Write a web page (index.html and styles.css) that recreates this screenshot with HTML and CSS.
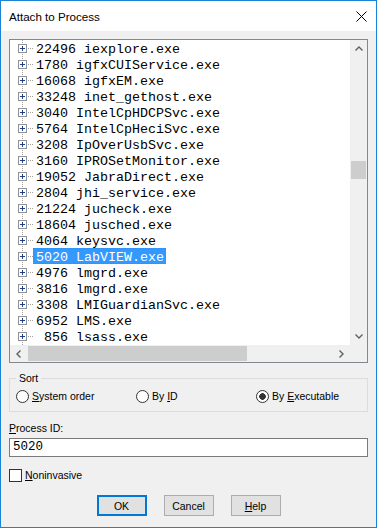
FILE: index.html
```html
<!DOCTYPE html>
<html lang="en">
<head>
  <meta charset="UTF-8" />
  <title>Attach to Process</title>
  <link rel="stylesheet" href="styles.css">
</head>
<body>

  <div class="window">
    <!-- caption -->
    <div class="titlebar">
      <span class="title">Attach to Process</span>
      <svg class="close" width="11" height="11" viewBox="0 0 11 11">
        <path d="M0.5 0.5L10.5 10.5M10.5 0.5L0.5 10.5" stroke="#000" stroke-width="1" fill="none"/>
      </svg>
    </div>

    <div class="client">
      <!-- process tree -->
      <div class="tree">
        <ul class="nodes">
          <li class="node"><span class="exp"></span><span class="twig"></span><span class="label">22496 iexplore.exe</span></li>
          <li class="node"><span class="exp"></span><span class="twig"></span><span class="label">1780 igfxCUIService.exe</span></li>
          <li class="node"><span class="exp"></span><span class="twig"></span><span class="label">16068 igfxEM.exe</span></li>
          <li class="node"><span class="exp"></span><span class="twig"></span><span class="label">33248 inet_gethost.exe</span></li>
          <li class="node"><span class="exp"></span><span class="twig"></span><span class="label">3040 IntelCpHDCPSvc.exe</span></li>
          <li class="node"><span class="exp"></span><span class="twig"></span><span class="label">5764 IntelCpHeciSvc.exe</span></li>
          <li class="node"><span class="exp"></span><span class="twig"></span><span class="label">3208 IpOverUsbSvc.exe</span></li>
          <li class="node"><span class="exp"></span><span class="twig"></span><span class="label">3160 IPROSetMonitor.exe</span></li>
          <li class="node"><span class="exp"></span><span class="twig"></span><span class="label">19052 JabraDirect.exe</span></li>
          <li class="node"><span class="exp"></span><span class="twig"></span><span class="label">2804 jhi_service.exe</span></li>
          <li class="node"><span class="exp"></span><span class="twig"></span><span class="label">21224 jucheck.exe</span></li>
          <li class="node"><span class="exp"></span><span class="twig"></span><span class="label">18604 jusched.exe</span></li>
          <li class="node"><span class="exp"></span><span class="twig"></span><span class="label">4064 keysvc.exe</span></li>
          <li class="node"><span class="exp"></span><span class="twig"></span><span class="label selected">5020 LabVIEW.exe</span></li>
          <li class="node"><span class="exp"></span><span class="twig"></span><span class="label">4976 lmgrd.exe</span></li>
          <li class="node"><span class="exp"></span><span class="twig"></span><span class="label">3816 lmgrd.exe</span></li>
          <li class="node"><span class="exp"></span><span class="twig"></span><span class="label">3308 LMIGuardianSvc.exe</span></li>
          <li class="node"><span class="exp"></span><span class="twig"></span><span class="label">6952 LMS.exe</span></li>
          <li class="node"><span class="exp"></span><span class="twig"></span><span class="label"> 856 lsass.exe</span></li>
        </ul>

        <div class="vscroll">
          <div class="sb-btn">
            <svg width="8" height="5" viewBox="0 0 8 5"><path d="M0.5 4.5L4 1L7.5 4.5" stroke="#606060" stroke-width="1.4" fill="none"/></svg>
          </div>
          <div class="sb-track"><div class="sb-thumb v"></div></div>
          <div class="sb-btn">
            <svg width="8" height="5" viewBox="0 0 8 5"><path d="M0.5 0.5L4 4L7.5 0.5" stroke="#606060" stroke-width="1.4" fill="none"/></svg>
          </div>
        </div>

        <div class="hscroll">
          <div class="sb-btn">
            <svg width="5" height="8" viewBox="0 0 5 8"><path d="M4.5 0.5L1 4L4.5 7.5" stroke="#606060" stroke-width="1.4" fill="none"/></svg>
          </div>
          <div class="sb-track"><div class="sb-thumb h"></div></div>
          <div class="sb-btn">
            <svg width="5" height="8" viewBox="0 0 5 8"><path d="M0.5 0.5L4 4L0.5 7.5" stroke="#606060" stroke-width="1.4" fill="none"/></svg>
          </div>
        </div>

        <div class="corner"></div>
      </div>

      <!-- sort options -->
      <fieldset class="sort">
        <legend>Sort</legend>
        <div class="radios">
          <div class="radio"><span class="circle"></span><span><u>S</u>ystem order</span></div>
          <div class="radio"><span class="circle"></span><span>By <u>I</u>D</span></div>
          <div class="radio"><span class="circle checked"></span><span>By <u>E</u>xecutable</span></div>
        </div>
      </fieldset>

      <div class="field-label"><u>P</u>rocess ID:</div>
      <div class="textbox">5020</div>

      <div class="check"><span class="box"></span><span><u>N</u>oninvasive</span></div>

      <div class="buttons">
        <button class="button default">OK</button>
        <button class="button">Cancel</button>
        <button class="button"><u>H</u>elp</button>
      </div>
    </div>
  </div>

</body>
</html>
```

FILE: styles.css
```css
/* base */
body {
  margin: 0;
  background: #ffffff;
  font-family: "Liberation Sans", Arial, sans-serif;
  font-size: 10.5px;
  color: #000;
}

u {
  text-decoration: underline;
  text-underline-offset: 1px;
}

/* window frame */
.window {
  width: 377px;
  height: 528px;
  box-sizing: border-box;
  border: 1px solid #1883d7;
  display: flex;
  flex-direction: column;
}

.titlebar {
  height: 30px;
  flex: none;
  background: #fff;
  display: flex;
  align-items: center;
  justify-content: space-between;
  padding: 0 9px 0 8px;
}

.title {
  font-size: 11.6px;
  padding-top: 1px;
}

.close {
  display: block;
}

.client {
  flex: 1;
  background: #f0f0f0;
  padding: 8px 8px 0 8px;
  display: flex;
  flex-direction: column;
}

/* tree view */
.tree {
  height: 324px;
  flex: none;
  box-sizing: border-box;
  border: 1px solid #828790;
  background: #fff;
  display: grid;
  grid-template-columns: 1fr 17px;
  grid-template-rows: 1fr 17px;
  overflow: hidden;
}

.nodes {
  list-style: none;
  margin: 0;
  padding: 0;
  overflow: hidden;
  background: linear-gradient(#a0a0a0 50%, transparent 0) 12px 0 / 1px 2px repeat-y, #fff;
}

.node {
  height: 16px;
  display: flex;
  align-items: center;
  padding-left: 8px;
}

.exp {
  width: 9px;
  height: 9px;
  box-sizing: border-box;
  border: 1px solid #919191;
  flex: none;
  background:
    linear-gradient(#1f3f8c, #1f3f8c) center / 5px 1px no-repeat,
    linear-gradient(#1f3f8c, #1f3f8c) center / 1px 5px no-repeat,
    #fff;
}

.twig {
  width: 6px;
  height: 1px;
  flex: none;
  background: linear-gradient(to right, transparent 50%, #a0a0a0 50%) 0 0 / 2px 1px repeat-x;
}

.label {
  font-family: "Liberation Mono", "Courier New", monospace;
  font-size: 13.33px;
  line-height: 10px;
  white-space: pre;
  border: 1px solid transparent;
  padding: 4px 1px 0 2px;
}

.label.selected {
  background: #3399ff;
  color: #fff;
  border: 1px dotted #b8732a;
}

/* scrollbars */
.vscroll {
  background: #f0f0f0;
  display: flex;
  flex-direction: column;
}

.hscroll {
  background: #f0f0f0;
  display: flex;
}

.sb-btn {
  width: 17px;
  height: 17px;
  flex: none;
  display: flex;
  align-items: center;
  justify-content: center;
}

.sb-btn svg {
  display: block;
}

.sb-track {
  flex: 1;
}

.sb-thumb {
  background: #cdcdcd;
}

.sb-thumb.v {
  width: 15px;
  height: 18px;
  margin: 104px 0 0 1px;
}

.sb-thumb.h {
  height: 15px;
  width: 219px;
  margin: 1px 0 0 1px;
}

.corner {
  background: #f0f0f0;
}

/* sort group */
.sort {
  margin: 8px 0 0 0;
  padding: 0 0 8px 6px;
  border: 1px solid #dcdcdc;
  min-inline-size: 0;
}

.sort legend {
  padding: 0 3px;
  line-height: 14px;
}

.radios {
  display: grid;
  grid-template-columns: 120px 120px 1fr;
  margin-top: 5px;
}

.radio {
  display: flex;
  align-items: center;
  gap: 3px;
  height: 13px;
  line-height: 13px;
}

.circle {
  width: 13px;
  height: 13px;
  box-sizing: border-box;
  border: 1px solid #333;
  border-radius: 50%;
  background: #fff;
  flex: none;
}

.circle.checked {
  background: radial-gradient(circle, #333 0 3px, #fff 3.6px);
}

/* process id */
.field-label {
  margin-top: 9px;
  line-height: 15px;
}

.textbox {
  margin-top: 2px;
  height: 19px;
  box-sizing: border-box;
  border: 1px solid #7a7a7a;
  background: #fff;
  padding-left: 3px;
  font-family: "Liberation Mono", "Courier New", monospace;
  font-size: 12.5px;
  line-height: 17px;
}

.check {
  margin-top: 12px;
  display: flex;
  align-items: center;
  gap: 3px;
  height: 13px;
  line-height: 13px;
}

.check .box {
  width: 13px;
  height: 13px;
  box-sizing: border-box;
  border: 1px solid #333;
  background: #fff;
}

/* dialog buttons */
.buttons {
  margin-top: 13px;
  display: flex;
  justify-content: center;
  gap: 17px;
}

.button {
  width: 50px;
  height: 21px;
  box-sizing: border-box;
  border: 1px solid #adadad;
  background: #e1e1e1;
  font-family: inherit;
  font-size: 10.5px;
  color: #000;
  padding: 0;
}

.button.default {
  border: 2px solid #0078d7;
}
```
